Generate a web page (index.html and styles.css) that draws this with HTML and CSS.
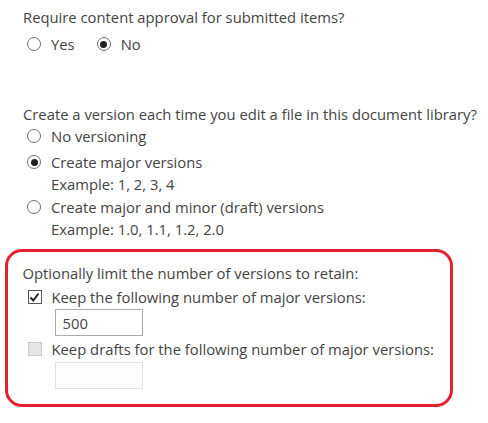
FILE: index.html
```html
<!DOCTYPE html>
<html>
<head>
<meta charset="utf-8">
<link rel="stylesheet" href="styles.css">
</head>
<body>
<div class="page">
  <div class="group g1">
    <div class="label">Require content approval for submitted items?</div>
    <div class="inline-row">
      <span class="opt"><span class="radio"></span>Yes</span>
      <span class="opt"><span class="radio on"></span>No</span>
    </div>
  </div>

  <div class="group g2">
    <div class="label">Create a version each time you edit a file in this document library?</div>
    <div class="opt row r1"><span class="radio"></span>No versioning</div>
    <div class="opt row r2"><span class="radio on"></span>Create major versions</div>
    <div class="example">Example: 1, 2, 3, 4</div>
    <div class="opt row r3"><span class="radio"></span>Create major and minor (draft) versions</div>
    <div class="example">Example: 1.0, 1.1, 1.2, 2.0</div>
  </div>

  <div class="highlight">
    <div class="label">Optionally limit the number of versions to retain:</div>
    <div class="opt row c1"><span class="check on">
      <svg width="11" height="11" viewBox="0 0 11 11"><path d="M1.5 5.5 L4.3 8.5 L9.5 1.5" fill="none" stroke="#222" stroke-width="2"/></svg>
    </span>Keep the following number of major versions:</div>
    <div class="field">500</div>
    <div class="opt row c2 disabled"><span class="check off"></span>Keep drafts for the following number of major versions:</div>
    <div class="field empty"></div>
  </div>
</div>
</body>
</html>
```

FILE: styles.css
```css
* { box-sizing: border-box; }
html, body { margin: 0; padding: 0; background: #fff; }
body {
  font-family: "Open Sans", "Noto Sans", sans-serif;
  font-size: 14.8px;
  color: #444;
  line-height: 22px;
}
.page { padding: 6px 0 0 0; width: 488px; }
.group { padding-left: 23px; }
.label { white-space: nowrap; }
.inline-row { display: flex; gap: 22px; padding-left: 4px; margin-top: 5px; }
.opt { display: flex; align-items: center; white-space: nowrap; }
.radio {
  width: 14px; height: 14px; border: 1px solid #6f6f6f; border-radius: 50%;
  margin-right: 10px; display: inline-flex; align-items: center; justify-content: center;
  background: #fff; flex: none;
}
.radio.on::after { content: ""; width: 7px; height: 7px; border-radius: 50%; background: #222; }
.g2 { margin-top: 48px; }
.row { padding-left: 4px; }
.r1 { margin-top: 0; }
.r2 { margin-top: 4px; }
.r3 { margin-top: 1px; }
.example { padding-left: 28px; }
.highlight {
  margin: 9px 0 0 5px;
  width: 448px;
  height: 158px;
  border: 3.5px solid #e3222b;
  border-radius: 17px;
  padding: 10px 0 0 14.5px;
}
.check {
  width: 14px; height: 14px; border: 1px solid #555; margin-right: 10px; flex: none;
  display: inline-flex; align-items: center; justify-content: center; background: #fff;
}
.check.off { background: #e6e6e6; border-color: #c8c8c8; }
.c1 { margin-top: 2px; padding-left: 5px; }
.c2 { margin-top: 2px; padding-left: 5px; }
.field {
  margin: 1px 0 0 32px; width: 88px; height: 27px; border: 1px solid #ababab;
  padding: 2px 7px; line-height: 22px;
}
.field.empty { border-color: #e1e1e1; background: #fdfdfd; margin-top: 2px; }
```
